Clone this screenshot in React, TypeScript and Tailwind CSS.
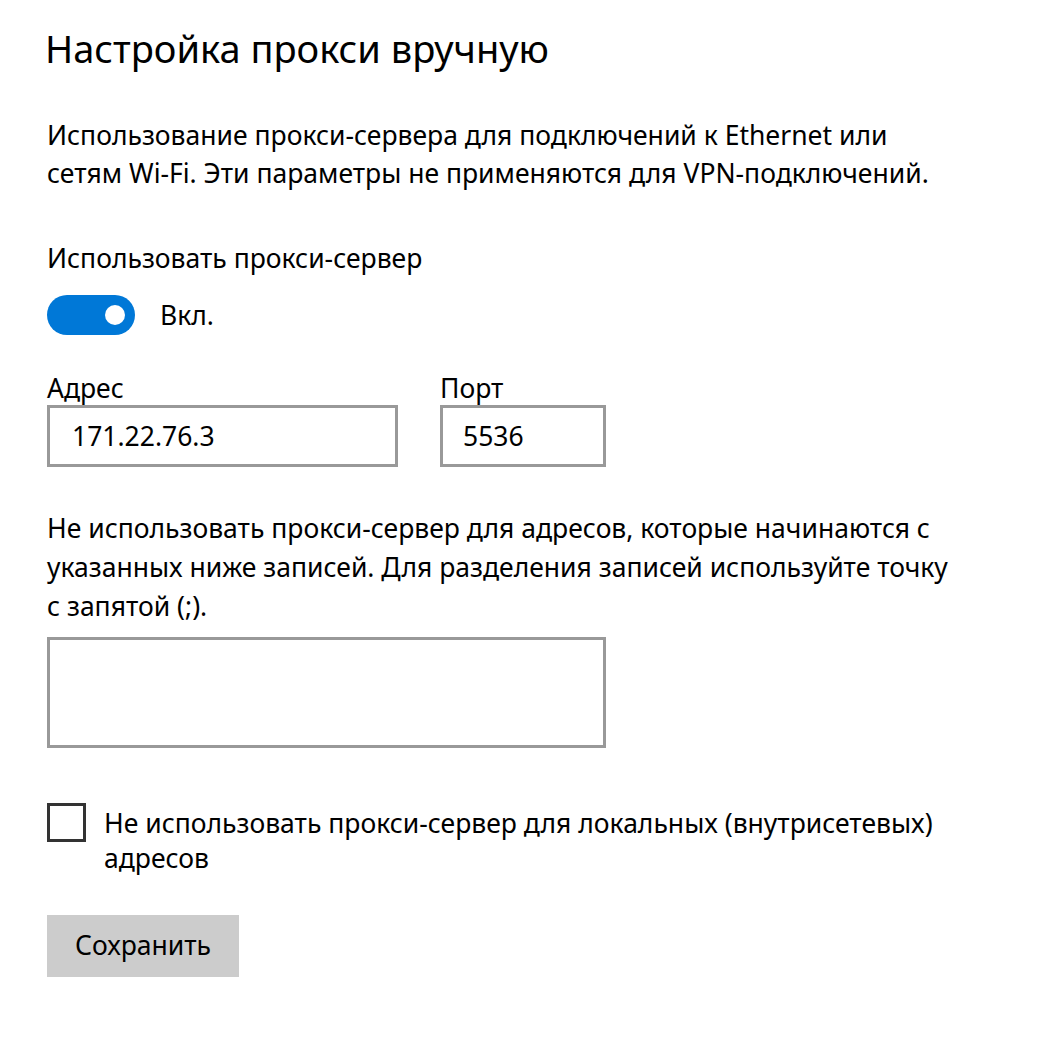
import { useState } from 'react'

export default function App() {
  const [enabled, setEnabled] = useState(true)
  const [address, setAddress] = useState('171.22.76.3')
  const [port, setPort] = useState('5536')
  const [exceptions, setExceptions] = useState('')
  const [local, setLocal] = useState(false)

  return (
    <div className="min-h-screen bg-white text-black font-['Noto_Sans',sans-serif] pl-[47px] pt-[24px]">
      <h1 className="text-[38px] leading-[48px] -ml-[2px]">Настройка прокси вручную</h1>

      <p className="mt-[44px] text-[26.5px] leading-[38px]">
        Использование прокси-сервера для подключений к Ethernet или
        <br />
        сетям Wi-Fi. Эти параметры не применяются для VPN-подключений.
      </p>

      <p className="mt-[47px] text-[26.5px] leading-[38px]">Использовать прокси-сервер</p>

      <div className="mt-[18px] flex items-center gap-[25px]">
        <button
          onClick={() => setEnabled(!enabled)}
          className={`w-[88px] h-[40px] rounded-full flex items-center px-[10px] ${
            enabled ? 'bg-[#0078d7] justify-end' : 'bg-white border-[3px] border-black justify-start'
          }`}
        >
          <span className={`block w-[20px] h-[20px] rounded-full ${enabled ? 'bg-white' : 'bg-black'}`} />
        </button>
        <span className="text-[26.5px] leading-[38px]">{enabled ? 'Вкл.' : 'Откл.'}</span>
      </div>

      <div className="mt-[34px] flex gap-[42px]">
        <label className="flex flex-col">
          <span className="text-[26.5px] leading-[38px] -mb-[2px]">Адрес</span>
          <input
            value={address}
            onChange={(e) => setAddress(e.target.value)}
            className="w-[351px] h-[62px] border-[3px] border-[#999999] px-[22px] text-[26.5px] outline-none"
          />
        </label>
        <label className="flex flex-col">
          <span className="text-[26.5px] leading-[38px] -mb-[2px]">Порт</span>
          <input
            value={port}
            onChange={(e) => setPort(e.target.value)}
            className="w-[166px] h-[62px] border-[3px] border-[#999999] px-[20px] text-[26.5px] outline-none"
          />
        </label>
      </div>

      <p className="mt-[42px] text-[26.5px] leading-[39px]">
        Не использовать прокси-сервер для адресов, которые начинаются с
        <br />
        указанных ниже записей. Для разделения записей используйте точку
        <br />
        с запятой (;).
      </p>

      <textarea
        value={exceptions}
        onChange={(e) => setExceptions(e.target.value)}
        className="mt-[11px] block w-[559px] h-[111px] border-[3px] border-[#999999] resize-none outline-none px-[22px] py-[10px] text-[26.5px]"
      />

      <label className="mt-[55px] flex items-start gap-[18px] cursor-pointer">
        <span
          onClick={() => setLocal(!local)}
          className="shrink-0 w-[39px] h-[39px] border-[3px] border-[#333333] flex items-center justify-center"
        >
          {local && (
            <svg width="26" height="26" viewBox="0 0 24 24" fill="none" stroke="#000" strokeWidth="2">
              <path d="M4 12l5 5L20 6" />
            </svg>
          )}
        </span>
        <span className="mt-[3px] text-[26.5px] leading-[35px]">
          Не использовать прокси-сервер для локальных (внутрисетевых)
          <br />
          адресов
        </span>
      </label>

      <button className="mt-[39px] w-[192px] h-[62px] bg-[#cccccc] text-[26.5px]">Сохранить</button>
    </div>
  )
}
